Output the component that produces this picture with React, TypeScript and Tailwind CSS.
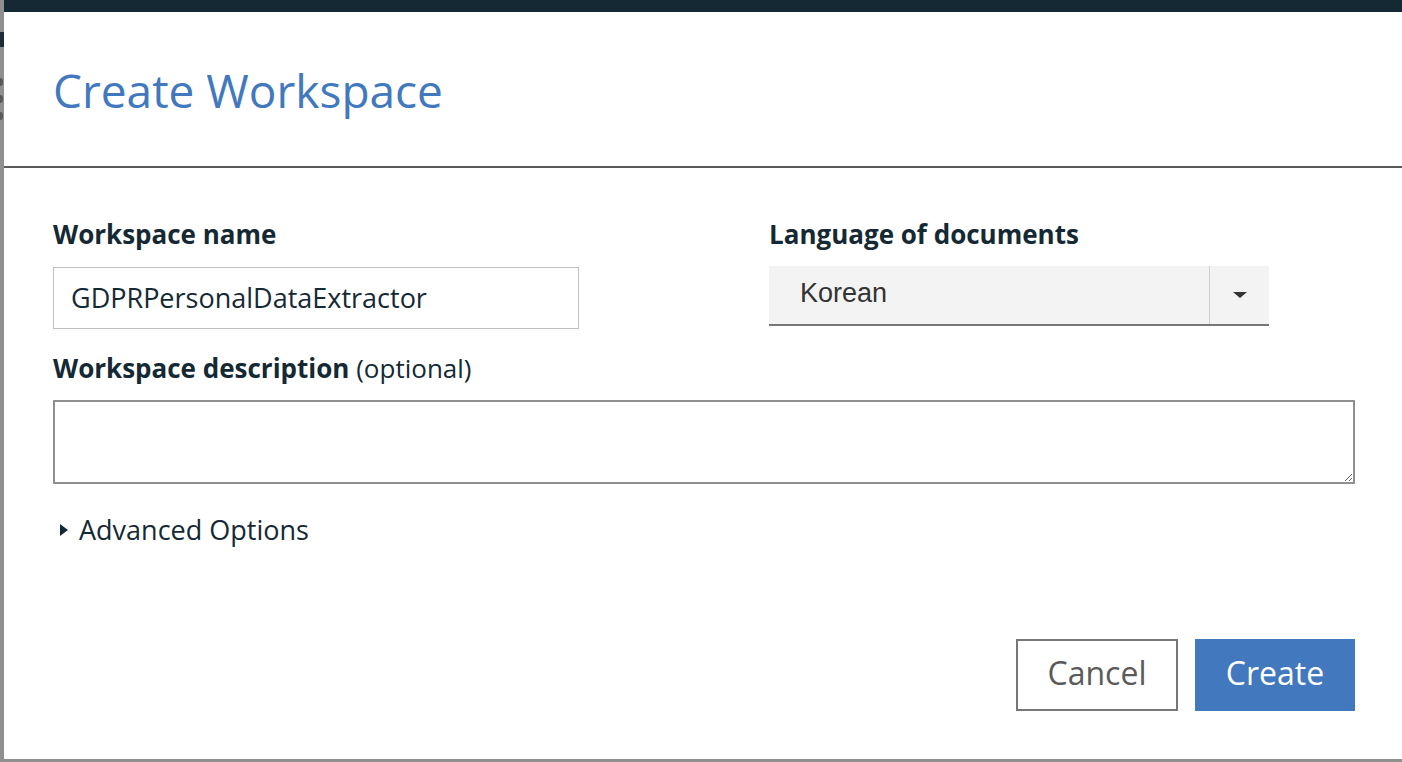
import React from "react";

export default function App() {
  const font = { fontFamily: '"Open Sans", "Noto Sans", sans-serif' };
  return (
    <div className="w-[1402px] h-[762px] bg-[#8f8f8f] flex overflow-hidden" style={font}>
      <div className="w-[4px] shrink-0 relative flex flex-col overflow-hidden">
        <div className="h-[32px]" />
        <div className="h-[15px] bg-[#1d2c37]" />
        <div className="absolute left-[-3px] top-[78px] w-[6px] h-[8px] rounded-full bg-[#5a5a5a]" />
        <div className="absolute left-[-3px] top-[95px] w-[6px] h-[8px] rounded-full bg-[#5a5a5a]" />
        <div className="absolute left-[-3px] top-[112px] w-[6px] h-[8px] rounded-full bg-[#5a5a5a]" />
      </div>
      <div className="flex-1 flex flex-col">
        <div className="h-[12px] bg-[#152935]" />
        <div className="h-[747px] bg-white flex flex-col">
          <div className="h-[156px] border-b-2 border-[#5a5a5a] pl-[49px] pt-[50px]">
            <h1 className="text-[46px] leading-[56px] text-[#4178be] font-medium">Create Workspace</h1>
          </div>
          <div className="pl-[49px] pr-[47px] pt-[50px] flex flex-col">
            <div className="flex">
              <div className="w-[526px] flex flex-col">
                <label className="text-[26px] leading-[32px] font-bold text-[#152935]">Workspace name</label>
                <div className="mt-[17px] h-[62px] border border-[#c0c0c0] flex items-center pl-[17px] text-[27px] text-[#152935]">
                  GDPRPersonalDataExtractor
                </div>
              </div>
              <div className="ml-[190px] w-[500px] flex flex-col">
                <label className="text-[26px] leading-[32px] font-bold text-[#152935]">Language of documents</label>
                <div className="mt-[16px] h-[60px] bg-[#f3f3f3] border-b-2 border-[#777777] flex items-center">
                  <span
                    className="flex-1 pl-[31px] text-[27px] text-[#333333] pb-[4px]"
                    style={{ fontFamily: '"Liberation Sans", Arial, sans-serif' }}
                  >
                    Korean
                  </span>
                  <div className="w-[60px] h-full border-l border-[#d0d0d0] flex items-center justify-center">
                    <svg width="16" height="8" viewBox="0 0 16 8">
                      <path d="M1 1 L15 1 L8 7 Z" fill="#333333" />
                    </svg>
                  </div>
                </div>
              </div>
            </div>
            <label className="mt-[23px] text-[26px] leading-[32px] text-[#152935]">
              <span className="font-bold">Workspace description</span> (optional)
            </label>
            <textarea className="mt-[16px] h-[84px] w-full border-2 border-[#8f8f8f] bg-white outline-none" />
            <div className="mt-[30px] flex items-center h-[32px] text-[27px] text-[#152935]">
              <svg width="8" height="12" viewBox="0 0 8 12" className="ml-[7px] mr-[11px]">
                <path d="M0 0 L8 6 L0 12 Z" fill="#152935" />
              </svg>
              <span>Advanced Options</span>
            </div>
            <div className="mt-[93px] flex justify-end gap-[17px]">
              <button className="w-[162px] h-[72px] border-2 border-[#777777] text-[32px] text-[#5a5a5a] bg-white pb-[4px]">
                Cancel
              </button>
              <button className="w-[160px] h-[72px] bg-[#4178be] text-[32px] text-white pb-[4px]">Create</button>
            </div>
          </div>
        </div>
      </div>
    </div>
  );
}
